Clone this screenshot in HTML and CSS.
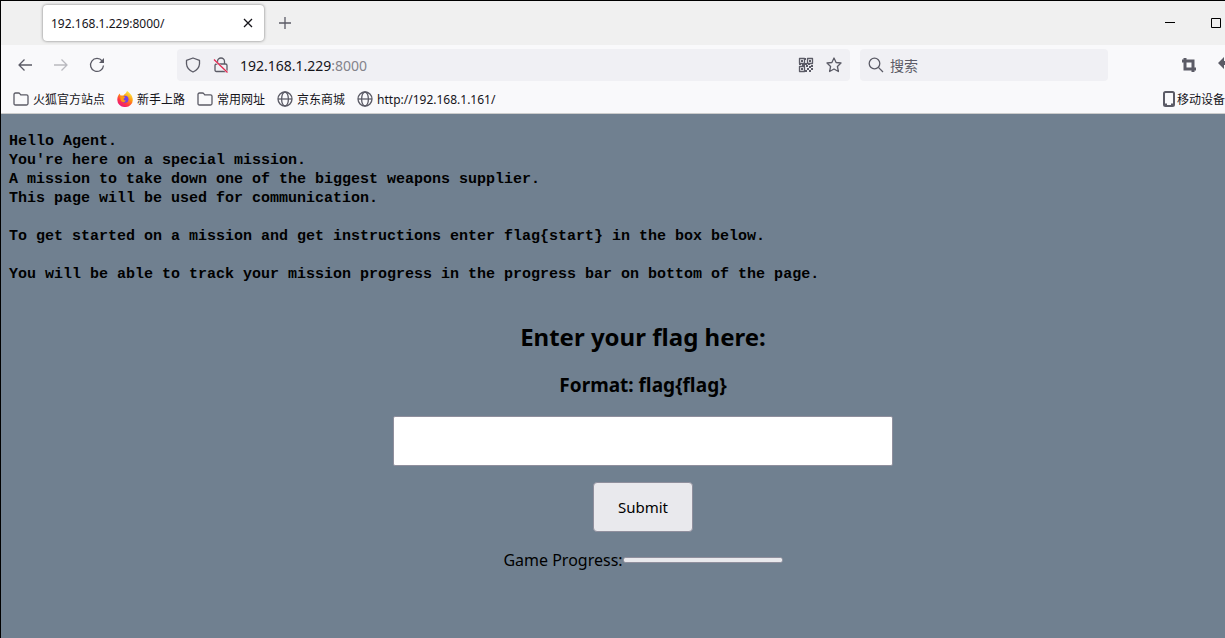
FILE: index.html
```html
<!DOCTYPE html>
<html lang="zh-CN">
<head>
<meta charset="utf-8">
<title>192.168.1.229:8000/</title>
<link rel="stylesheet" href="styles.css">
</head>
<body>
<svg class="sprites" aria-hidden="true">
  <symbol id="folder" viewBox="0 0 16 16"><path d="M1 12.5V3.5Q1 2 2.500 2H5.500Q6.300 2 6.800 2.700L7.700 3.800H13.500Q15 3.800 15 5.300V12.500Q15 14 13.500 14H2.500Q1 14 1 12.500Z"/></symbol>
  <symbol id="globe" viewBox="0 0 16 16"><circle cx="8" cy="8" r="7"/><ellipse cx="8" cy="8" rx="3.400" ry="7"/><path d="M1 8H15"/></symbol>
</svg>
<div class="browser">
  <header>
    <div class="tab-strip">
      <div class="tab"><span>192.168.1.229:8000/</span>
        <button class="plain" aria-label="关闭标签页"><svg class="icon dark" viewBox="0 0 16 16"><path d="M4 4L12 12M12 4L4 12"/></svg></button>
      </div>
      <button class="plain new-tab" aria-label="新建标签页"><svg class="icon" viewBox="0 0 16 16"><path d="M8 2V14M2 8H14"/></svg></button>
      <div class="window-controls">
        <button class="plain" aria-label="最小化"><svg class="window-icon" viewBox="0 0 12 12"><path d="M1 5.500H11"/></svg></button>
        <button class="plain" aria-label="最大化"><svg class="window-icon" viewBox="0 0 12 12"><path d="M1.500 1.500H10.500V10.500H1.500Z"/></svg></button>
      </div>
    </div>
    <nav class="toolbar">
      <div class="history">
        <button class="plain" aria-label="后退"><svg class="icon" viewBox="0 0 16 16"><path d="M15 8H2M7.500 2.500L2 8L7.500 13.500"/></svg></button>
        <button class="plain" aria-label="前进" disabled><svg class="icon" viewBox="0 0 16 16"><path d="M1 8H14M8.500 2.500L14 8L8.500 13.500"/></svg></button>
        <button class="plain" aria-label="刷新"><svg class="icon" viewBox="0 0 16 16"><path d="M13.200 4A6.500 6.500 0 1 0 14.500 8.500"/><path class="solid" d="M15 1V6H10Z"/></svg></button>
      </div>
      <div class="address">
        <svg class="icon" viewBox="0 0 16 16"><path d="M8 1L14.500 3.400V7Q14 12.500 8 15Q2 12.500 1.500 7V3.400Z"/></svg>
        <svg class="icon" viewBox="0 0 16 16"><path d="M4.500 7V4.500A3.500 3.500 0 0 1 11.500 4.500V7M3.500 7H12.500Q14 7 14 8.500V13Q14 14.500 12.500 14.500H3.500Q2 14.500 2 13V8.500Q2 7 3.500 7Z"/><path class="halo" d="M1 3L15 16"/><path class="slash" d="M1 2.500L14.500 15.500"/></svg>
        <a class="url" href="#">192.168.1.229<span>:8000</span></a>
        <button class="plain" aria-label="二维码"><svg class="icon" viewBox="0 0 16 16"><path d="M1.500 1.500H6.500V6.500H1.500ZM9.500 1.500H14.500V6.500H9.500ZM1.500 9.500H6.500V14.500H1.500Z"/><path class="solid" d="M3 3H5V5H3ZM11 3H13V5H11ZM3 11H5V13H3ZM7 1H8V3H7ZM7 6H9V8H7ZM1 7H3V8H1ZM4 7H7V9H4ZM8 8H10V10H8ZM10 7H12V8H10ZM13 8H15V10H13ZM11 9H13V11H11ZM9 11H11V13H9ZM7 13H9V15H7ZM13 11H15V13H13ZM11 13H13V15H11Z"/></svg></button>
        <button class="plain" aria-label="添加书签"><svg class="icon" viewBox="0 0 16 16"><path d="M8 1L10.100 5.500L15 6L11.400 9.500L12.400 14.500L8 12L3.600 14.500L4.600 9.500L1 6L5.900 5.500Z"/></svg></button>
      </div>
      <label class="search"><svg class="icon" viewBox="0 0 16 16"><circle cx="6.500" cy="6.500" r="5.300"/><path d="M10.400 10.400L15 15"/></svg><input type="search" placeholder="搜索" aria-label="搜索"></label>
      <div class="tools">
        <button class="plain" aria-label="截图"><svg class="icon bold" viewBox="0 0 16 16"><path d="M1 4H12V15M4 1V12H15"/></svg></button>
        <button class="plain" aria-label="撤销"><svg class="icon" viewBox="0 0 16 16"><path class="solid" d="M0 6L6 0V12ZM5 4H12V8H5Z"/></svg></button>
      </div>
    </nav>
    <nav class="bookmarks">
      <a href="#"><svg class="icon"><use href="#folder"/></svg>火狐官方站点</a>
      <a href="#"><svg class="fox" viewBox="0 0 16 16">
        <defs><linearGradient id="flame" x1=".8" y1="0" x2=".2" y2="1"><stop offset="0" stop-color="#fff44f"/><stop offset=".4" stop-color="#ff980e"/><stop offset=".7" stop-color="#ff3647"/><stop offset="1" stop-color="#e31587"/></linearGradient></defs>
        <path fill="url(#flame)" d="M10 0C12 1.500 15.800 4 15.800 9A7.700 7 0 0 1 .3 9C.2 6 1.500 4 2.500 2.500L3.500 4.500L6.500 4.500C7 3 9.500 2.500 10 0Z"/>
        <circle cx="8" cy="8.300" r="3.500" fill="#7542e5"/><path fill="#ff980e" d="M3 5.500Q6 4 8.200 6.300L6.500 8Q7 9.800 9 9.500Q7 12.500 4 10Z"/></svg>新手上路</a>
      <a href="#"><svg class="icon"><use href="#folder"/></svg>常用网址</a>
      <a href="#"><svg class="icon"><use href="#globe"/></svg>京东商城</a>
      <a href="#"><svg class="icon"><use href="#globe"/></svg>http://192.168.1.161/</a>
      <a class="mobile" href="#"><svg class="phone" viewBox="0 0 12 16"><path d="M2.500 1H9.500Q11 1 11 2.500V13.500Q11 15 9.500 15H2.500Q1 15 1 13.500V2.500Q1 1 2.500 1ZM1 13.500H4M8 13.500H11"/></svg>移动设备</a>
    </nav>
  </header>
  <main>
<pre>Hello Agent.
You're here on a special mission.
A mission to take down one of the biggest weapons supplier.
This page will be used for communication.

To get started on a mission and get instructions enter flag{start} in the box below.

You will be able to track your mission progress in the progress bar on bottom of the page.</pre>
    <form class="flag-form" onsubmit="return false">
      <h1><label for="flag">Enter your flag here:</label></h1>
      <h2>Format: flag{flag}</h2>
      <input id="flag" type="text">
      <button class="submit" type="submit">Submit</button>
      <div class="progress-row"><label for="progress">Game Progress:</label><progress id="progress" value="0" max="100"></progress></div>
    </form>
  </main>
</div>
</body>
</html>
```
FILE: styles.css
```css
* { box-sizing: border-box; }
body {
  margin: 0;
  overflow: hidden;
  font-family: "Noto Sans", "Noto Sans CJK SC", sans-serif;
  font-size: 12px;
  color: #15141a;
}
a { color: inherit; text-decoration: none; }
.sprites { position: absolute; width: 0; height: 0; }
.browser {
  display: flex;
  flex-direction: column;
  min-height: 100vh;
  border: solid #000;
  border-width: 1px 0 0 1px;
  background: #708090;
}
.icon, .window-icon, .phone {
  display: block;
  flex: none;
  width: 16px;
  height: 16px;
  fill: none;
  stroke: #5b5b66;
  stroke-width: 1.3;
  stroke-linejoin: round;
}
.icon.dark { stroke: #15141a; }
.icon.bold { stroke-width: 3; stroke-linejoin: miter; }
.window-icon { width: 12px; height: 12px; stroke: #000; stroke-width: 1; stroke-linejoin: miter; }
.phone { width: 12px; stroke-width: 2; }
.solid { fill: #5b5b66; stroke: none; }
.halo { stroke: #f0f0f4; stroke-width: 2; }
.slash { stroke: #e22850; }
.plain { flex: none; padding: 0; border: 0; background: none; }
.plain:disabled { opacity: 0.4; }

.tab-strip {
  display: flex;
  align-items: center;
  height: 44px;
  padding-left: 42px;
  background: #f0f0f0;
}
.tab {
  display: flex;
  align-items: center;
  justify-content: space-between;
  width: 221px;
  height: 36px;
  padding: 0 8px;
  border-radius: 4px;
  background: #fff;
  box-shadow: 0 0 3px #777;
}
.new-tab { margin-left: 13px; }
.window-controls {
  display: flex;
  gap: 34px;
  margin-left: auto;
  margin-right: 3px;
}

.toolbar {
  display: flex;
  align-items: center;
  height: 40px;
  background: #f9f9fb;
}
.history {
  display: flex;
  gap: 20px;
  width: 176px;
  padding-left: 16px;
}
.address, .search {
  display: flex;
  align-items: center;
  height: 32px;
  border-radius: 4px;
  background: #f0f0f4;
}
.address { flex: 1; gap: 12px; padding: 0 8px; }
.url { flex: 1; margin-left: -1px; font-size: 14px; }
.url span { color: #84838b; }
.search { width: 248px; margin-left: 10px; padding: 0 8px; gap: 6px; }
.search input {
  width: 100%;
  padding: 0;
  border: 0;
  outline: 0;
  background: none;
  font: 14px "Noto Sans CJK SC", sans-serif;
}
.search input::placeholder { color: #5b5b66; }
.tools {
  display: flex;
  flex: none;
  gap: 21px;
  width: 117px;
  padding-left: 73px;
}

.bookmarks {
  display: flex;
  align-items: center;
  gap: 12px;
  height: 29px;
  padding-left: 12px;
  border-bottom: 1px solid #ccc;
  background: #f9f9fb;
  white-space: nowrap;
}
.bookmarks a { display: flex; align-items: center; gap: 4px; }
.bookmarks .mobile { gap: 2px; margin-left: auto; }
.fox { width: 16px; height: 16px; }

main { flex: 1; padding: 18px 8px; color: #000; }
pre {
  margin: 0;
  font: bold 15px/19px "Liberation Mono", monospace;
}
.flag-form {
  display: flex;
  flex-direction: column;
  align-items: center;
  margin: 35px 0 0 60px;
  font-size: 16px;
}
h1 { margin: 0; font-size: 24px; line-height: 36px; }
h2 { margin: 16px 0 17px; font-size: 19px; line-height: 28px; }
#flag {
  width: 500px;
  max-width: 100%;
  height: 50px;
  padding: 0 12px;
  border: 1px solid #8f8f9d;
  border-radius: 2px;
  background: #fff;
  font: inherit;
}
.submit {
  width: 100px;
  height: 50px;
  margin: 16px 0;
  border: 1px solid #8f8f9d;
  border-radius: 4px;
  background: #e9e9ed;
  color: #000;
  font: inherit;
  font-size: 15px;
}
.progress-row { display: flex; align-items: center; line-height: 24px; }
progress {
  appearance: none;
  width: 160px;
  height: 6px;
  border: 1px solid #8f8f9d;
  border-radius: 3px;
  background: #e9e9ed;
}
progress::-webkit-progress-bar { border-radius: 2px; background: #e9e9ed; }
progress::-webkit-progress-value { background: #0060df; }
```
